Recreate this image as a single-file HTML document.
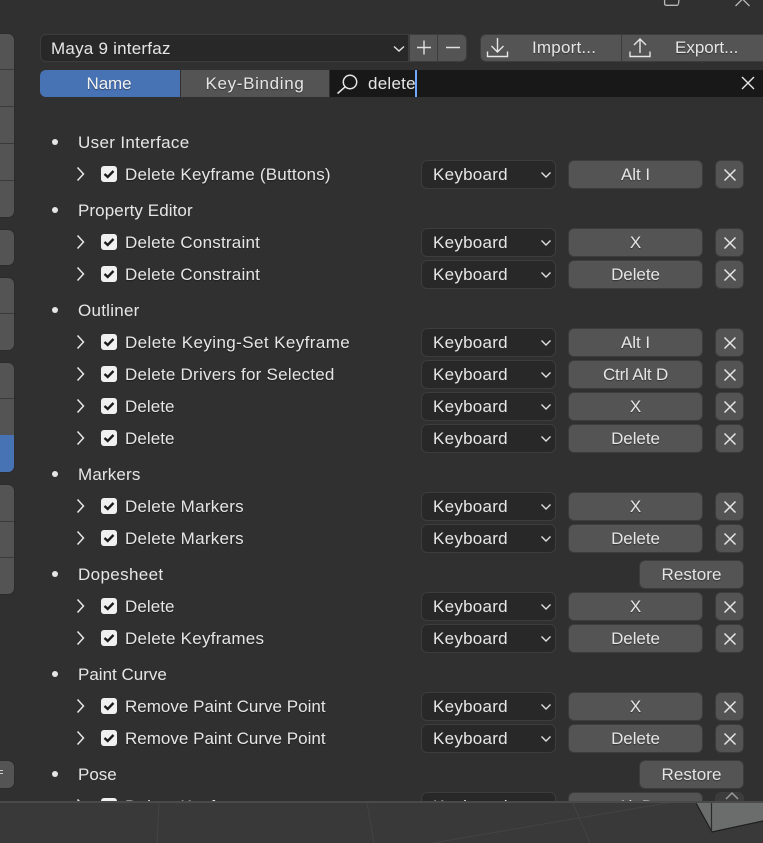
<!DOCTYPE html>
<html><head><meta charset="utf-8"><style>
*{box-sizing:border-box}
html,body{margin:0;padding:0;background:#303030}
body{width:763px;height:843px;position:relative;overflow:hidden;font-family:"Liberation Sans",sans-serif;font-size:17px;color:#e6e6e6}
.a{position:absolute}
.s{position:absolute;left:-8px;width:22px;background:#545454;border-radius:0 6px 6px 0;box-shadow:0 0 0 1px #2c2c2c}
.d{position:absolute;left:0;width:14px;height:1px;background:#3a3a3a}
#m{position:absolute;left:0;top:0;width:763px;height:801px;overflow:hidden}
.h{position:absolute;left:78px;height:30px;line-height:30px;white-space:nowrap;letter-spacing:.16px}
.b{position:absolute;left:52px;width:6px;height:6px;border-radius:50%;background:#e6e6e6}
.r{position:absolute;left:0;width:763px;height:29px}
.c{position:absolute;left:75px;top:6px}
.k{position:absolute;left:101px;top:6px;width:16px;height:16px;background:#f0f0f0;border-radius:3px}
.n{position:absolute;left:125px;top:0;line-height:30px;white-space:nowrap;text-shadow:0 1px 1px rgba(0,0,0,.4);letter-spacing:.22px}
.t{position:absolute;left:421px;top:0;width:135px;height:29px;background:#282828;border:1px solid #3d3d3d;border-radius:6px;line-height:28px;padding-left:11px;letter-spacing:.26px}
.t svg{position:absolute;left:118px;top:10px}
.y{position:absolute;left:568px;top:0;width:135px;height:29px;background:#545454;border:1px solid #3d3d3d;border-radius:6px;line-height:28px;text-align:center;text-shadow:0 1px 1px rgba(0,0,0,.4);letter-spacing:-.05px}
.x{position:absolute;left:715px;top:0;width:29px;height:29px;background:#545454;border:1px solid #3d3d3d;border-radius:6px}
.x svg{position:absolute;left:6.500px;top:7px}
.o{position:absolute;left:639px;width:105px;height:29px;background:#545454;border:1px solid #3d3d3d;border-radius:6px;line-height:28px;text-align:center;text-shadow:0 1px 1px rgba(0,0,0,.4);letter-spacing:.06px}
</style></head><body>
<svg class="a" style="left:660px;top:0" width="95" height="8" fill="none" stroke="#b8b8b8" stroke-width="1.3"><path d="M4.600-3V3.500Q4.600 5.300 6.400 5.300H17.200Q19 5.300 19-3"/><path d="M75.500 6L82.500 -1L89.500 6"/></svg>
<div class="s" style="top:34px;height:183px"></div><div class="d" style="top:69px"></div><div class="d" style="top:106px"></div><div class="d" style="top:143px"></div><div class="d" style="top:180px"></div>
<div class="s" style="top:230px;height:35px"></div>
<div class="s" style="top:278px;height:72px"></div><div class="d" style="top:313px"></div>
<div class="s" style="top:363px;height:109px"></div><div class="d" style="top:398px"></div>
<div class="a" style="left:0;top:435px;width:14px;height:37px;background:#4772b3;border-radius:0 0 6px 0"></div>
<div class="s" style="top:485px;height:109px"></div><div class="d" style="top:521px"></div><div class="d" style="top:557px"></div>
<div class="s" style="top:761px;height:27px"></div>
<div class="a" style="left:0;top:770px;width:3px;height:1px;background:#ccc"></div><div class="a" style="left:0;top:773px;width:3px;height:1px;background:#ccc"></div>

<div id="m">
<div class="a" style="left:40px;top:34px;width:369px;height:28px;background:#282828;border:1px solid #3d3d3d;border-radius:6px 0 0 6px;line-height:27px;padding-left:10px;letter-spacing:.23px">Maya 9 interfaz<svg class="a" style="left:352px;top:10px" width="12" height="8" fill="none" stroke="#e0e0e0" stroke-width="1.400"><path d="M1 1.500L6 6L11 1.500"/></svg></div>
<div class="a" style="left:409px;top:34px;width:58px;height:28px;background:#545454;border:1px solid #3d3d3d;border-radius:0 6px 6px 0"></div>
<div class="a" style="left:437px;top:35px;width:1px;height:26px;background:#3d3d3d"></div>
<svg class="a" style="left:414px;top:38px" width="48" height="20" stroke="#e0e0e0" stroke-width="1.400"><path d="M3 9.500H17M10 2.500V16.500M32 9.500H46"/></svg>
<div class="a" style="left:480px;top:34px;width:290px;height:28px;background:#545454;border:1px solid #3d3d3d;border-radius:6px"></div>
<div class="a" style="left:621px;top:35px;width:1px;height:26px;background:#3d3d3d"></div>
<svg class="a" style="left:486px;top:36px" width="24" height="22" fill="none" stroke="#e6e6e6" stroke-width="1.400"><path d="M11.500 2V16M5.500 10L11.500 16L17.500 10M1.500 15.500V20.500H21.500V15.500"/></svg>
<svg class="a" style="left:628px;top:36px" width="24" height="22" fill="none" stroke="#e6e6e6" stroke-width="1.400"><path d="M12 3V17M6 9L12 3L18 9M2 15.500V20.500H22V15.500"/></svg>
<div class="a" style="left:532px;top:34px;line-height:28px;letter-spacing:.2px;text-shadow:0 1px 1px rgba(0,0,0,.4)">Import...</div>
<div class="a" style="left:675px;top:34px;line-height:28px;letter-spacing:0;text-shadow:0 1px 1px rgba(0,0,0,.4)">Export...</div>

<div class="a" style="left:40px;top:70px;width:138px;height:27px;background:#4772b3;border-radius:6px 0 0 6px;text-align:center;line-height:28px;color:#f2f2f2;letter-spacing:-.1px;text-shadow:0 1px 1px rgba(0,0,0,.4)">Name</div>
<div class="a" style="left:178px;top:70px;width:2px;height:27px;background:#4772b3"></div>
<div class="a" style="left:181px;top:70px;width:148px;height:27px;background:#545454;text-align:center;line-height:28px;letter-spacing:.66px;text-shadow:0 1px 1px rgba(0,0,0,.4)">Key-Binding</div>
<div class="a" style="left:330px;top:70px;width:433px;height:27px;background:#181818"></div>
<svg class="a" style="left:335px;top:72px" width="26" height="24" fill="none" stroke="#e6e6e6" stroke-width="1.500"><circle cx="15" cy="10" r="6.700"/><path d="M2.500 21.500L10.200 14.800"/></svg>
<div class="a" style="left:368px;top:70px;line-height:28px;letter-spacing:.26px">delete</div>
<div class="a" style="left:415px;top:70px;width:2px;height:27px;background:#71a8ff"></div>
<svg class="a" style="left:741px;top:76px" width="14" height="14" fill="none" stroke="#e6e6e6" stroke-width="1.400"><path d="M1 1L13 13M13 1L1 13"/></svg>

<svg width="0" height="0" style="position:absolute"><defs>
<symbol id="ch" viewBox="0 0 10 16"><path d="M2.500 1.500L8.500 8L2.500 14.500" fill="none" stroke="#e6e6e6" stroke-width="1.500"/></symbol>
<symbol id="ck" viewBox="0 0 16 16"><path d="M3.500 8L6.700 11L12.500 5" fill="none" stroke="#1c1c1c" stroke-width="2.400"/></symbol>
<symbol id="dn" viewBox="0 0 12 8"><path d="M1.500 1.500L6 6L10.500 1.500" fill="none" stroke="#e0e0e0" stroke-width="1.400"/></symbol>
<symbol id="xx" viewBox="0 0 14 14"><path d="M1.500 1.500L12.500 12.500M12.500 1.500L1.500 12.500" fill="none" stroke="#e6e6e6" stroke-width="1.500"/></symbol>
</defs></svg>

<div class="b" style="top:139px"></div><div class="h" style="top:128px;letter-spacing:.34px">User Interface</div>
<div class="r" style="top:160px"><svg class="c" width="10" height="16"><use href="#ch"/></svg><div class="k"><svg width="16" height="16"><use href="#ck"/></svg></div><div class="n">Delete Keyframe (Buttons)</div><div class="t">Keyboard<svg width="12" height="8"><use href="#dn"/></svg></div><div class="y">Alt I</div><div class="x"><svg width="14" height="14"><use href="#xx"/></svg></div></div>

<div class="b" style="top:207px"></div><div class="h" style="top:196px;letter-spacing:.09px">Property Editor</div>
<div class="r" style="top:228px"><svg class="c" width="10" height="16"><use href="#ch"/></svg><div class="k"><svg width="16" height="16"><use href="#ck"/></svg></div><div class="n">Delete Constraint</div><div class="t">Keyboard<svg width="12" height="8"><use href="#dn"/></svg></div><div class="y">X</div><div class="x"><svg width="14" height="14"><use href="#xx"/></svg></div></div>
<div class="r" style="top:260px"><svg class="c" width="10" height="16"><use href="#ch"/></svg><div class="k"><svg width="16" height="16"><use href="#ck"/></svg></div><div class="n">Delete Constraint</div><div class="t">Keyboard<svg width="12" height="8"><use href="#dn"/></svg></div><div class="y">Delete</div><div class="x"><svg width="14" height="14"><use href="#xx"/></svg></div></div>

<div class="b" style="top:307px"></div><div class="h" style="top:296px;letter-spacing:.26px">Outliner</div>
<div class="r" style="top:328px"><svg class="c" width="10" height="16"><use href="#ch"/></svg><div class="k"><svg width="16" height="16"><use href="#ck"/></svg></div><div class="n" style="letter-spacing:.41px">Delete Keying-Set Keyframe</div><div class="t">Keyboard<svg width="12" height="8"><use href="#dn"/></svg></div><div class="y">Alt I</div><div class="x"><svg width="14" height="14"><use href="#xx"/></svg></div></div>
<div class="r" style="top:360px"><svg class="c" width="10" height="16"><use href="#ch"/></svg><div class="k"><svg width="16" height="16"><use href="#ck"/></svg></div><div class="n" style="letter-spacing:.24px">Delete Drivers for Selected</div><div class="t">Keyboard<svg width="12" height="8"><use href="#dn"/></svg></div><div class="y" style="letter-spacing:-.2px">Ctrl Alt D</div><div class="x"><svg width="14" height="14"><use href="#xx"/></svg></div></div>
<div class="r" style="top:392px"><svg class="c" width="10" height="16"><use href="#ch"/></svg><div class="k"><svg width="16" height="16"><use href="#ck"/></svg></div><div class="n" style="letter-spacing:.06px">Delete</div><div class="t">Keyboard<svg width="12" height="8"><use href="#dn"/></svg></div><div class="y">X</div><div class="x"><svg width="14" height="14"><use href="#xx"/></svg></div></div>
<div class="r" style="top:424px"><svg class="c" width="10" height="16"><use href="#ch"/></svg><div class="k"><svg width="16" height="16"><use href="#ck"/></svg></div><div class="n" style="letter-spacing:.06px">Delete</div><div class="t">Keyboard<svg width="12" height="8"><use href="#dn"/></svg></div><div class="y">Delete</div><div class="x"><svg width="14" height="14"><use href="#xx"/></svg></div></div>

<div class="b" style="top:471px"></div><div class="h" style="top:460px">Markers</div>
<div class="r" style="top:492px"><svg class="c" width="10" height="16"><use href="#ch"/></svg><div class="k"><svg width="16" height="16"><use href="#ck"/></svg></div><div class="n" style="letter-spacing:.26px">Delete Markers</div><div class="t">Keyboard<svg width="12" height="8"><use href="#dn"/></svg></div><div class="y">X</div><div class="x"><svg width="14" height="14"><use href="#xx"/></svg></div></div>
<div class="r" style="top:524px"><svg class="c" width="10" height="16"><use href="#ch"/></svg><div class="k"><svg width="16" height="16"><use href="#ck"/></svg></div><div class="n" style="letter-spacing:.26px">Delete Markers</div><div class="t">Keyboard<svg width="12" height="8"><use href="#dn"/></svg></div><div class="y">Delete</div><div class="x"><svg width="14" height="14"><use href="#xx"/></svg></div></div>

<div class="b" style="top:571px"></div><div class="h" style="top:560px;letter-spacing:.36px">Dopesheet</div><div class="o" style="top:560px">Restore</div>
<div class="r" style="top:592px"><svg class="c" width="10" height="16"><use href="#ch"/></svg><div class="k"><svg width="16" height="16"><use href="#ck"/></svg></div><div class="n" style="letter-spacing:.06px">Delete</div><div class="t">Keyboard<svg width="12" height="8"><use href="#dn"/></svg></div><div class="y">X</div><div class="x"><svg width="14" height="14"><use href="#xx"/></svg></div></div>
<div class="r" style="top:624px"><svg class="c" width="10" height="16"><use href="#ch"/></svg><div class="k"><svg width="16" height="16"><use href="#ck"/></svg></div><div class="n" style="letter-spacing:.26px">Delete Keyframes</div><div class="t">Keyboard<svg width="12" height="8"><use href="#dn"/></svg></div><div class="y">Delete</div><div class="x"><svg width="14" height="14"><use href="#xx"/></svg></div></div>

<div class="b" style="top:671px"></div><div class="h" style="top:660px;letter-spacing:0">Paint Curve</div>
<div class="r" style="top:692px"><svg class="c" width="10" height="16"><use href="#ch"/></svg><div class="k"><svg width="16" height="16"><use href="#ck"/></svg></div><div class="n" style="letter-spacing:.01px">Remove Paint Curve Point</div><div class="t">Keyboard<svg width="12" height="8"><use href="#dn"/></svg></div><div class="y">X</div><div class="x"><svg width="14" height="14"><use href="#xx"/></svg></div></div>
<div class="r" style="top:724px"><svg class="c" width="10" height="16"><use href="#ch"/></svg><div class="k"><svg width="16" height="16"><use href="#ck"/></svg></div><div class="n" style="letter-spacing:.01px">Remove Paint Curve Point</div><div class="t">Keyboard<svg width="12" height="8"><use href="#dn"/></svg></div><div class="y">Delete</div><div class="x"><svg width="14" height="14"><use href="#xx"/></svg></div></div>

<div class="b" style="top:771px"></div><div class="h" style="top:760px;letter-spacing:0">Pose</div><div class="o" style="top:760px">Restore</div>
<div class="r" style="top:792px"><svg class="c" width="10" height="16"><use href="#ch"/></svg><div class="k"><svg width="16" height="16"><use href="#ck"/></svg></div><div class="n">Delete Keyframe</div><div class="t">Keyboard</div><div class="y">Alt D</div><div class="x" style="background:#3c3c3c"></div></div>
<svg class="a" style="left:722px;top:790px" width="20" height="12" fill="none" stroke="#9a9a9a" stroke-width="1.500"><path d="M4 9L10 3L16 9"/></svg>
</div>

<svg class="a" style="left:0;top:801px" width="763" height="42">
<rect width="763" height="42" fill="#393939"/>
<path d="M159 2L157 42M367 2L374 42M573 2L590 42M433 42L667 2" stroke="#434343" stroke-width="1" fill="none"/>
<rect width="763" height="2" fill="#4a4a4a"/>
<path d="M696 2L712 31L763 20V2Z" fill="#6a6d6b"/>
<path d="M696 2L712 31L763 20" fill="none" stroke="#1e1e1e" stroke-width="1.200"/>
<path d="M711.500 2V31" stroke="#2a2a2a" stroke-width="1.200"/>
</svg>
</body></html>
